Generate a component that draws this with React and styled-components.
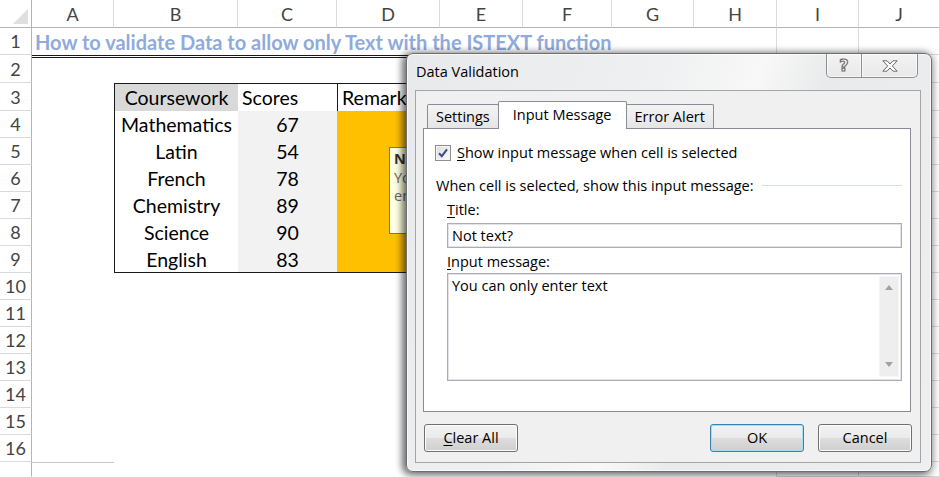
import React from 'react';
import styled, { createGlobalStyle, css } from 'styled-components';

const SHEET_FONT = `Lato, "Open Sans", sans-serif`;
const UI_FONT = `"Open Sans", "Noto Sans", sans-serif`;

const COLS = [32, 82, 124, 99, 103, 83, 89, 82, 83, 82, 81];
const LETTERS = ['A', 'B', 'C', 'D', 'E', 'F', 'G', 'H', 'I', 'J'];
const ROWS = [28, 27, 28, 28, ...Array(13).fill(27), 15];
const SUBJECTS = [
  ['Mathematics', 67],
  ['Latin', 54],
  ['French', 78],
  ['Chemistry', 89],
  ['Science', 90],
  ['English', 83],
];

const GlobalStyle = createGlobalStyle`
  html, body { margin: 0; padding: 0; background: #fff; }
  body { width: 940px; height: 477px; overflow: hidden; font-family: ${SHEET_FONT}; }
  *, *::before, *::after { box-sizing: border-box; }
`;

/* first letter is the underlined access key */
const accelKey = css`
  &::first-letter {
    text-decoration: underline;
    text-underline-offset: 2px;
    text-decoration-thickness: 1px;
  }
`;

const Stage = styled.div`
  position: relative;
  width: 940px;
  height: 477px;
  overflow: hidden;
  background: #fff;
`;

const Sheet = styled.div`
  display: grid;
  grid-template-columns: ${COLS.map((c) => `${c}px`).join(' ')};
  grid-template-rows: ${ROWS.map((r) => `${r}px`).join(' ')};
  font-family: ${SHEET_FONT};
`;

const Corner = styled.div`
  position: relative;
  border-right: 1px solid #b4b4b4;
  border-bottom: 1px solid #b4b4b4;
  background: #fff;
`;

const CornerTriangle = styled.svg`
  position: absolute;
  right: 3px;
  bottom: 3px;
`;

const ColHeader = styled.div`
  display: flex;
  align-items: center;
  justify-content: center;
  background: #fff;
  color: #444;
  font-size: 18px;
  border-right: 1px solid #dadada;
  border-bottom: 1px solid #b4b4b4;
`;

const RowHeader = styled.div`
  display: flex;
  align-items: center;
  justify-content: center;
  background: #fff;
  color: #444;
  font-size: 18px;
  border-right: 1px solid #b4b4b4;
  border-bottom: 1px solid ${(p) => (p.$last ? 'transparent' : '#dadada')};
`;

const Cell = styled.div`
  display: flex;
  align-items: center;
  justify-content: ${(p) => (p.$align === 'center' ? 'center' : 'flex-start')};
  grid-column: ${(p) => (p.$span ? `span ${p.$span}` : 'auto')};
  padding: 0 ${(p) => (p.$pad ?? 4)}px;
  background: ${(p) => p.$fill || '#fff'};
  color: #000;
  font-size: 19.5px;
  white-space: nowrap;
  overflow: visible;
  border-top: ${(p) =>
    p.$doubleTop ? '3px double #1a1a1a' : p.$bt ? '1px solid #1a1a1a' : p.$lightTop ? '1px solid #c8c8c8' : 'none'};
  border-left: ${(p) => (p.$bl ? '1px solid #1a1a1a' : 'none')};
  border-right: ${(p) => (p.$br ? '1px solid #1a1a1a' : p.$grid || p.$gridRight ? '1px solid #dadada' : 'none')};
  border-bottom: ${(p) => (p.$bb ? '1px solid #1a1a1a' : p.$grid ? '1px solid #dadada' : 'none')};
`;

const SheetTitle = styled.span`
  font-weight: 700;
  color: #8faadc;
  font-size: 20px;
`;

const Tooltip = styled.div`
  position: absolute;
  left: 389px;
  top: 147px;
  width: 112px;
  height: 87px;
  padding: 2px 4px;
  background: #ffffe1;
  border: 1px solid #767676;
  font-family: ${UI_FONT};
  font-size: 14.5px;
  line-height: 18.5px;
  color: #666;
`;

const TooltipTitle = styled.div`
  font-weight: 700;
  color: #333;
`;

/* ---------- Dialog ---------- */

const Dialog = styled.div`
  position: absolute;
  left: 406px;
  top: 53px;
  width: 526px;
  height: 419px;
  display: flex;
  flex-direction: column;
  padding: 0 10px 8px 8px;
  border: 1px solid #6e6e6e;
  border-radius: 7px;
  background: linear-gradient(112deg, #e7e9eb 0%, #eff0f1 38%, #f8f8f8 52%, #e9eaeb 62%, #eeeff0 100%);
  box-shadow: inset 0 0 0 1px rgba(255, 255, 255, 0.7), -3px 1px 7px 1px rgba(0, 0, 0, 0.45),
    0 2px 10px 1px rgba(0, 0, 0, 0.3);
  font-family: ${UI_FONT};
  font-size: 14.5px;
  color: #000;
`;

const TitleBar = styled.div`
  height: 36px;
  display: flex;
  align-items: flex-start;
`;

const DialogTitle = styled.div`
  margin: 8px 0 0 1px;
  line-height: 20px;
  color: #000;
`;

const CaptionGroup = styled.div`
  margin-left: auto;
  margin-right: 3px;
  display: flex;
`;

const CaptionButton = styled.div`
  width: ${(p) => (p.$kind === 'close' ? 56 : 36)}px;
  height: 24px;
  display: flex;
  align-items: center;
  justify-content: center;
  border: 1px solid #8f8f8f;
  border-top: none;
  border-left: ${(p) => (p.$kind === 'close' ? 'none' : '1px solid #8f8f8f')};
  border-radius: ${(p) => (p.$kind === 'close' ? '0 0 5px 0' : '0 0 0 5px')};
  background: linear-gradient(#f3f3f3, #e9e9e9);
  box-shadow: inset 0 0 0 1px rgba(255, 255, 255, 0.6);
`;

const HelpGlyph = styled.span`
  font-family: "DejaVu Sans", sans-serif;
  font-weight: 700;
  font-size: 16px;
  line-height: 16px;
  color: #fff;
  -webkit-text-stroke: 1.1px #6a6a6a;
`;

const Client = styled.div`
  flex: 1;
  display: flex;
  flex-direction: column;
  border: 1px solid #a5a5a5;
  background: #f0f0f0;
`;

const TabStrip = styled.div`
  height: 37px;
  display: flex;
  align-items: flex-end;
  padding-left: 11px;
`;

const Tab = styled.div`
  position: relative;
  display: flex;
  align-items: center;
  height: ${(p) => (p.$active ? 28 : 24)}px;
  margin: 0 ${(p) => (p.$active ? '-1px' : '0')} ${(p) => (p.$active ? '-1px' : '0')};
  padding: ${(p) => (p.$active ? '0 14px 2px' : '0 8px')};
  z-index: ${(p) => (p.$active ? 1 : 0)};
  border: 1px solid #898c95;
  border-bottom: none;
  border-radius: 2px 2px 0 0;
  background: ${(p) => (p.$active ? '#fff' : 'linear-gradient(#f4f4f4, #e5e5e5)')};
  white-space: nowrap;
`;

const TabPanel = styled.div`
  height: 284px;
  margin: 0 9px 0 7px;
  padding: 14px 8px 0 12px;
  border: 1px solid #898c95;
  background: #fff;
  display: flex;
  flex-direction: column;
`;

const CheckRow = styled.div`
  display: flex;
  align-items: center;
  gap: 6px;
  height: 20px;
  margin-left: -1px;
`;

const CheckBox = styled.div`
  flex: none;
  width: 16px;
  height: 16px;
  border: 1px solid #8e8f8f;
  background: linear-gradient(135deg, #dcdcdc, #fbfbfb);
  box-shadow: inset 0 0 0 1px #f4f4f4;
  display: flex;
  align-items: center;
  justify-content: center;
`;

const CheckLabel = styled.div`
  line-height: 20px;
  white-space: nowrap;
  ${accelKey}
`;

const GroupHeader = styled.div`
  display: flex;
  align-items: center;
  height: 20px;
  margin-top: 13px;
`;

const GroupText = styled.div`
  line-height: 20px;
  white-space: nowrap;
`;

const GroupRule = styled.div`
  flex: 1;
  margin-left: 8px;
  border-top: 1px solid #d5dfe5;
  border-bottom: 1px solid #fff;
`;

const Indented = styled.div`
  margin-left: 11px;
  display: flex;
  flex-direction: column;
`;

const FieldLabel = styled.div`
  height: 20px;
  line-height: 20px;
  margin-top: ${(p) => p.$gap}px;
  margin-bottom: ${(p) => p.$after}px;
  ${accelKey}
`;

const TextField = styled.div`
  height: 25px;
  display: flex;
  align-items: center;
  padding: 0 4px;
  border: 1px solid #abadb3;
  box-shadow: inset 0 0 0 1px #e3e4ea;
  background: #fff;
`;

const MessageBox = styled.div`
  height: 108px;
  display: flex;
  border: 1px solid #abadb3;
  box-shadow: inset 0 0 0 1px #e3e4ea;
  background: #fff;
`;

const MessageText = styled.div`
  flex: 1;
  padding: 2px 4px;
  line-height: 20px;
`;

const ScrollBar = styled.div`
  width: 20px;
  margin: 2px 2px 3px 0;
  display: flex;
  flex-direction: column;
  align-items: center;
  justify-content: space-between;
  padding: 8px 0 9px;
  background: #eeeeee;
  border: 1px solid #f6f6f6;
`;

const ButtonRow = styled.div`
  display: flex;
  align-items: center;
  gap: 14px;
  padding: 12px 8px 10px 8px;
`;

const Spacer = styled.div`
  flex: 1;
`;

const PushButton = styled.button`
  width: 94px;
  height: 28px;
  padding: 0;
  font-family: ${UI_FONT};
  font-size: 14.5px;
  color: #000;
  border: 1px solid ${(p) => (p.$default ? '#3c7fb1' : '#707070')};
  border-radius: 3px;
  background: linear-gradient(#f2f2f2 0%, #ebebeb 49%, #dddddd 50%, #cfcfcf 100%);
  box-shadow: inset 0 0 0 1px ${(p) => (p.$default ? '#a8dcf5' : '#fcfcfc')};
  line-height: 20px;
  ${(p) => p.$accel && accelKey}
`;

function CloseIcon() {
  return (
    <svg width="16" height="12" viewBox="0 0 16 12">
      <path
        d="M0.8 0.8 H5 L8 4 L11 0.8 H15.2 L10.3 6 L15.2 11.2 H11 L8 8 L5 11.2 H0.8 L5.7 6 Z"
        fill="#fff"
        stroke="#6c6c6c"
        strokeWidth="1"
        strokeLinejoin="round"
      />
    </svg>
  );
}

function Arrow({ down }) {
  return (
    <svg width="8" height="5" viewBox="0 0 8 5">
      <polygon points={down ? '0,0 8,0 4,5' : '0,5 8,5 4,0'} fill="#a2a2a2" />
    </svg>
  );
}

function buildCell(r, c) {
  const p = {};
  let content = null;
  if (c >= 8) p.$grid = true;
  if (c === 7) p.$gridRight = true;
  if (r === 2 && c <= 6) p.$doubleTop = true;
  if (r === 3) {
    if (c === 1) {
      Object.assign(p, { $fill: '#d9d9d9', $align: 'center', $bt: true, $bl: true });
      content = 'Coursework';
    }
    if (c === 2) {
      Object.assign(p, { $bt: true });
      content = 'Scores';
    }
    if (c === 3) {
      Object.assign(p, { $bt: true, $bl: true, $br: true });
      content = 'Remark';
    }
  }
  if (r >= 4 && r <= 9) {
    const [name, score] = SUBJECTS[r - 4];
    if (c === 1) {
      Object.assign(p, { $align: 'center', $bl: true });
      content = name;
    }
    if (c === 2) {
      Object.assign(p, { $align: 'center', $fill: '#f2f2f2' });
      content = score;
    }
    if (c === 3) Object.assign(p, { $fill: '#ffc000', $br: true });
    if (r === 9 && c >= 1 && c <= 3) p.$bb = true;
  }
  if (r === 17 && c === 0) p.$lightTop = true;
  return { p, content };
}

function SheetGrid() {
  const cells = [];
  cells.push(
    <Corner key="corner">
      <CornerTriangle width="15" height="15" viewBox="0 0 15 15">
        <polygon points="15,0 15,15 0,15" fill="#dfdfdf" />
      </CornerTriangle>
    </Corner>
  );
  LETTERS.forEach((l) => cells.push(<ColHeader key={`h-${l}`}>{l}</ColHeader>));
  for (let r = 1; r <= 17; r += 1) {
    cells.push(
      <RowHeader key={`r-${r}`} $last={r === 17}>
        {r <= 16 ? r : ''}
      </RowHeader>
    );
    if (r === 1) {
      cells.push(
        <Cell key="title" $span={7} $pad={3}>
          <SheetTitle>How to validate Data to allow only Text with the ISTEXT function</SheetTitle>
        </Cell>
      );
      for (let c = 7; c < 10; c += 1) {
        const { p } = buildCell(r, c);
        cells.push(<Cell key={`${r}-${c}`} {...p} />);
      }
      continue;
    }
    for (let c = 0; c < 10; c += 1) {
      const { p, content } = buildCell(r, c);
      cells.push(
        <Cell key={`${r}-${c}`} {...p}>
          {content}
        </Cell>
      );
    }
  }
  return <Sheet>{cells}</Sheet>;
}

function DataValidationDialog() {
  return (
    <Dialog>
      <TitleBar>
        <DialogTitle>Data Validation</DialogTitle>
        <CaptionGroup>
          <CaptionButton $kind="help">
            <HelpGlyph>?</HelpGlyph>
          </CaptionButton>
          <CaptionButton $kind="close">
            <CloseIcon />
          </CaptionButton>
        </CaptionGroup>
      </TitleBar>
      <Client>
        <TabStrip>
          <Tab>Settings</Tab>
          <Tab $active>Input Message</Tab>
          <Tab>Error Alert</Tab>
        </TabStrip>
        <TabPanel>
          <CheckRow>
            <CheckBox>
              <svg width="12" height="12" viewBox="0 0 12 12">
                <path d="M2 6.2 L4.8 9.2 L10 2.4" fill="none" stroke="#3a4d86" strokeWidth="2" />
              </svg>
            </CheckBox>
            <CheckLabel>Show input message when cell is selected</CheckLabel>
          </CheckRow>
          <GroupHeader>
            <GroupText>When cell is selected, show this input message:</GroupText>
            <GroupRule />
          </GroupHeader>
          <Indented>
            <FieldLabel $gap={4} $after={3}>
              Title:
            </FieldLabel>
            <TextField>Not text?</TextField>
            <FieldLabel $gap={4} $after={1}>
              Input message:
            </FieldLabel>
            <MessageBox>
              <MessageText>You can only enter text</MessageText>
              <ScrollBar>
                <Arrow />
                <Arrow down />
              </ScrollBar>
            </MessageBox>
          </Indented>
        </TabPanel>
        <ButtonRow>
          <PushButton $accel>Clear All</PushButton>
          <Spacer />
          <PushButton $default>OK</PushButton>
          <PushButton>Cancel</PushButton>
        </ButtonRow>
      </Client>
    </Dialog>
  );
}

export default function App() {
  return (
    <>
      <GlobalStyle />
      <Stage>
        <SheetGrid />
        <Tooltip>
          <TooltipTitle>Not text?</TooltipTitle>
          You can only enter text
        </Tooltip>
        <DataValidationDialog />
      </Stage>
    </>
  );
}
